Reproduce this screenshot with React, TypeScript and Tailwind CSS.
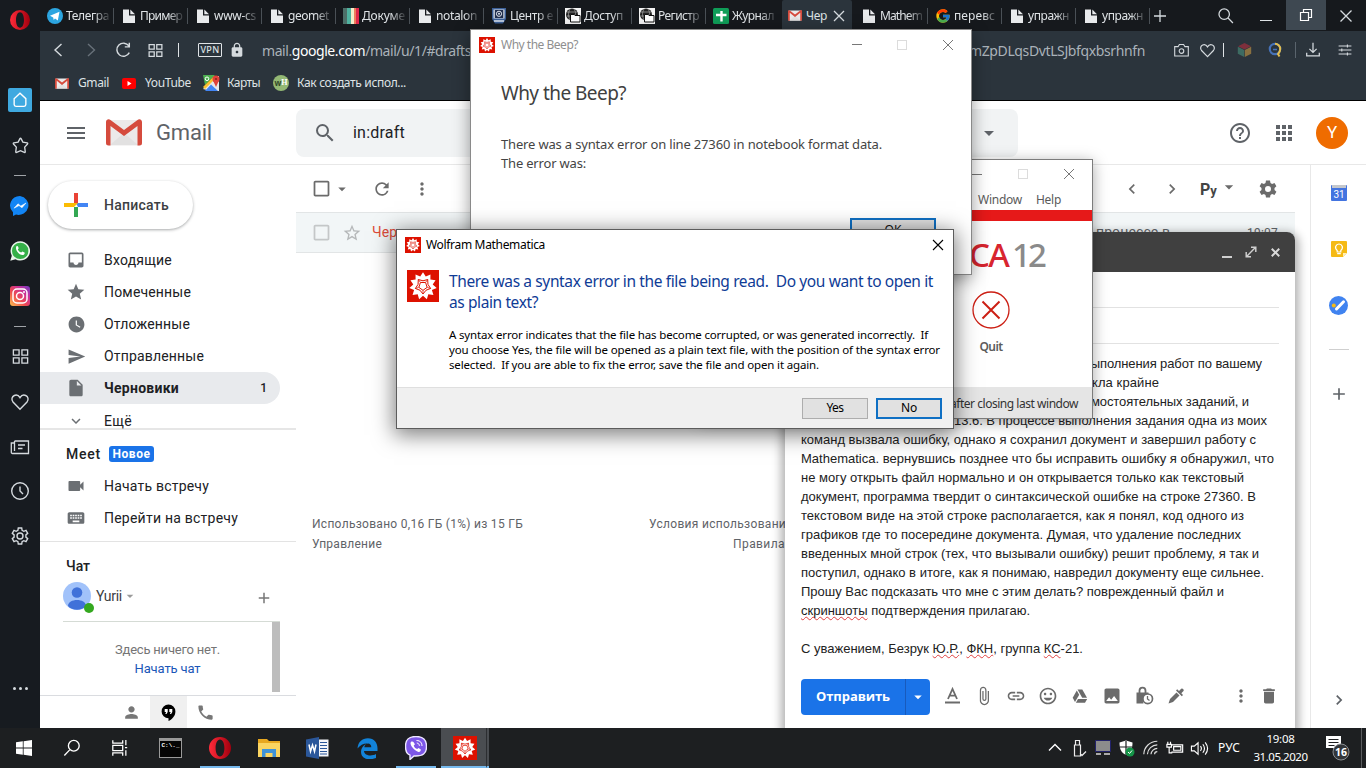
import { useLayoutEffect, useRef, type ReactNode } from "react";
import {
  MdInbox, MdStar, MdWatchLater, MdSend, MdInsertDriveFile, MdKeyboardArrowDown, MdVideocam, MdKeyboard,
  MdPerson, MdPhone, MdSearch, MdRefresh, MdMoreVert, MdStarBorder, MdCheckBoxOutlineBlank, MdHelpOutline,
  MdApps, MdAdd, MdAttachFile, MdLink, MdInsertEmoticon, MdImage, MdDelete, MdArrowDropDown,
  MdChevronLeft, MdChevronRight, MdMenu, MdLock,
} from "react-icons/md";
import { FcGoogle } from "react-icons/fc";

/* A run of text whose tracking is adjusted so that it spans w pixels. */
function T({ w, className = "", children }: { w: number; className?: string; children: ReactNode }) {
  const ref = useRef<HTMLSpanElement>(null);
  useLayoutEffect(() => {
    const el = ref.current;
    if (!el) return;
    el.style.letterSpacing = "0px";
    const n = (el.textContent || "").length;
    el.style.letterSpacing = (w - el.getBoundingClientRect().width) / n + "px";
  }, [w, children]);
  return <span ref={ref} className={"inline-block shrink-0 whitespace-pre " + className}>{children}</span>;
}

const star = (n: number, r1: number, r2: number, rot = 0) =>
  Array.from({ length: n * 2 }, (_, i) => {
    const a = (Math.PI * i) / n - Math.PI / 2 + rot;
    const r = i % 2 ? r2 : r1;
    return `${(16 + r * Math.cos(a)).toFixed(2)},${(16 + r * Math.sin(a)).toFixed(2)}`;
  }).join(" ");

function Spikey({ s }: { s: number }) {
  return (
    <svg width={s} height={s} viewBox="0 0 32 32" className="shrink-0">
      <rect width="32" height="32" fill="#dd1100" />
      <polygon points={star(11, 13.8, 9.8)} fill="#fff" />
      <g fill="none" stroke="#dd1100" strokeWidth="1">
        <polygon points={star(5, 8, 5.2, Math.PI)} />
        <polygon points={star(5, 4.4, 3.5, Math.PI)} />
        <path d="M16 20.500v3.500M11.600 17.400l-3.400 1.100M20.400 17.400l3.400 1.100M13.300 12.300l-2-2.800M18.700 12.300l2-2.800" strokeWidth=".7" />
      </g>
    </svg>
  );
}

const FileIcon = () => (
  <svg width="16" height="16" viewBox="0 0 16 16" className="shrink-0"><path d="M2 1.500h6v6h6V15H2z" fill="#e8eaec" /><path d="M9.300 1.500v4.800H14z" fill="#e8eaec" /></svg>
);

function GmailIcon({ w, h }: { w: number; h: number }) {
  return (
    <svg width={w} height={h} viewBox="0 0 36 27" preserveAspectRatio="none" className="shrink-0">
      <rect x="1" y="1" width="34" height="25.500" rx="2" fill="#eceaea" />
      <path d="M4 26L18 14l14 12z" fill="#dcdada" opacity=".6" />
      <path d="M0 3v21a2.500 2.500 0 002.500 2.500H4.500V7L18 17 31.500 7v19.500h2A2.500 2.500 0 0036 24V3c0-2.500-2.800-3.800-4.500-2L18 11 4.500 1C2.500-.6 0 .8 0 3z" fill="#d54b3d" />
    </svg>
  );
}

const OperaLogo = ({ s }: { s: number }) => (
  <svg width={s} height={s} viewBox="0 0 20 20" className="shrink-0">
    <defs><linearGradient id="op" x1="0" x2="1"><stop offset="0" stopColor="#ff2b3a" /><stop offset="1" stopColor="#a3000e" /></linearGradient></defs>
    <path fillRule="evenodd" fill="url(#op)" d="M10 0a10 10 0 100 20 10 10 0 000-20zm0 2.300c2.500 0 4 3.400 4 7.700s-1.500 7.700-4 7.700S6 14.300 6 10s1.500-7.700 4-7.700z" />
  </svg>
);

const Line = ({ s = 20, d, c = "#d5dade", sw = 1.4, vb = 20 }: { s?: number; d: string; c?: string; sw?: number; vb?: number }) => (
  <svg width={s} height={s} viewBox={`0 0 ${vb} ${vb}`} fill="none" stroke={c} strokeWidth={sw} className="shrink-0"><path d={d} /></svg>
);

const X = "M5 5l10 10M15 5L5 15";
const HEART = "M10 17.300L3 10C1 7.500 2 4.500 4.300 3.500 6.500 2.600 8.700 3.500 10 5.700c1.300-2.200 3.500-3.100 5.700-2.200C18 4.500 19 7.500 17 10z";
const GRID = "M2.500 3h6v5.500h-6zM11.500 3h6v5.500h-6zM2.500 11.500h6V17h-6zM11.500 11.500h6V17h-6z";

const Telegram = () => (
  <svg width="16" height="16" viewBox="0 0 16 16" className="shrink-0"><circle cx="8" cy="8" r="8" fill="#2ca5e0" /><path d="M3 7.800l9.500-4-1.700 8.700-2.800-2-1.300 1.500-.5-2.500z" fill="#fff" /></svg>
);
const Stripes = () => (
  <svg width="16" height="16" viewBox="0 0 16 16" className="shrink-0"><path fill="#4d6f68" d="M0 0h4v16H0z" /><path fill="#4fb3a0" d="M4 0h4v16H4z" /><path fill="#f5ecc9" d="M8 0h3v16H8z" /><path fill="#ee7e5e" d="M11 0h2v16h-2z" /><path fill="#e0264a" d="M13 0h3v16h-3z" /></svg>
);
const Crest = () => (
  <svg width="16" height="16" viewBox="0 0 15 16" className="shrink-0"><path fill="#3b5f97" d="M.5 0h14v11l-3 4.500h-8L.5 11z" /><path fill="#dfe5ec" d="M2 1.500h11v9H2z" /><path fill="#22304f" d="M3.300 2h8.500v8H3.300z" /><circle cx="7.500" cy="5.800" r="2.600" fill="none" stroke="#dfe5ee" /><circle cx="7.500" cy="5.800" r="1" fill="#dfe5ee" /><path d="M2.500 13h10" stroke="#dfe5ee" strokeWidth="1.500" /></svg>
);
const Folder = () => (
  <svg width="16" height="16" viewBox="0 0 16 16" className="shrink-0"><path fill="#f4f4f4" d="M0 0h16v16H0z" /><circle cx="7" cy="6.500" r="6" fill="#222" /><path d="M2 4h10M2 8h10M5 1c-2 4-2 7 0 11M9 1c2 3 2 6 0 8" stroke="#aaa" fill="none" strokeWidth=".7" /><path d="M5.500 6.500h3.500l1 1h5V14H5.500z" fill="#fff" stroke="#111" /></svg>
);
const Sheets = () => (
  <svg width="16" height="16" viewBox="0 0 16 16" className="shrink-0"><rect width="16" height="16" rx="1.500" fill="#0f9d58" /><path d="M8.500 3v10.500M3 7h10.500" stroke="#fff" strokeWidth="2.400" /></svg>
);

const tabs: [ReactNode, string, number][] = [
  [<Telegram />, "Телегра", 43], [<FileIcon />, "Пример", 42], [<FileIcon />, "www-cs", 42], [<FileIcon />, "geomet", 41],
  [<Stripes />, "Докуме", 43], [<FileIcon />, "notalon", 41], [<Crest />, "Центр е", 43], [<Folder />, "Доступ", 39],
  [<Folder />, "Регистр", 41], [<Sheets />, "Журнал", 42],
];
const tabs2: [ReactNode, string, number][] = [
  [<FileIcon />, "Mathem", 42], [<FcGoogle size={16} className="shrink-0" />, "перевс", 41], [<FileIcon />, "упражн", 41], [<FileIcon />, "упражн", 41],
];

function Tab({ icon, text, w, last }: { icon: ReactNode; text: string; w: number; last?: boolean }) {
  return (
    <div className={"flex h-[31px] shrink-0 items-center gap-[3px] pl-[7px] " + (last ? "w-[76px]" : "w-[74px]")}>
      {icon}
      <div className="flex h-[20px] w-[43px] shrink-0 items-center [mask-image:linear-gradient(to_right,black_65%,rgba(0,0,0,.15))]">
        <T w={w} className="text-[12px] leading-[20px] text-[#dfe3e6]">{text}</T>
      </div>
      <div className={"ml-[1px] h-[16px] w-px shrink-0 " + (last ? "bg-transparent" : "bg-[#4a5056]")} />
    </div>
  );
}

function Sidebar() {
  return (
    <aside className="flex w-[40px] shrink-0 flex-col bg-[#171b20] [&>div]:flex [&>div]:shrink-0 [&>div]:items-center [&>div]:justify-center">
      <div className="h-[40px]"><OperaLogo s={20} /></div>
      <div className="mt-[38px] h-[44px]"><span className="flex h-[24px] w-[24px] items-center justify-center rounded-[2px] bg-[#3fa9e0]"><Line s={18} d="M3.500 8.500L10 2.500l6.500 6v6.500q0 2-2 2h-9q-2 0-2-2z" c="#fff" sw={1.5} /></span></div>
      <div className="h-[46px]"><Line s={19} d="M10 2.300q.4 0 .6.500l1.900 3.700 4.500.8q1 .3.400 1.100l-3 3.300.6 4.900q0 1-1 .7L10 15.500l-4 1.800q-1 .3-1-.7l.6-4.900-3-3.300q-.6-.8.4-1.100l4.500-.8 1.900-3.700q.2-.5.6-.5z" /></div>
      <div className="h-[15px]"><i className="h-px w-[12px] bg-[#a0a4a8]" /></div>
      <div className="h-[46px]">
        <svg width="20" height="20" viewBox="0 0 20 20"><path d="M10 0a9.800 9.500 0 00-7 16.200V20l3-1.400A10 9.500 0 1010 0z" fill="#1285f5" /><path d="M4 12.200l4-4.400 2.800 2.200L16 7l-4 4.800-3-2.200z" fill="#fff" stroke="#fff" strokeWidth=".5" /></svg>
      </div>
      <div className="h-[44px]">
        <svg width="20" height="20" viewBox="0 0 20 20"><path d="M10.200.2A9.700 9.700 0 001.800 14.700L.3 19.700l5.200-1.400A9.700 9.700 0 1010.200.2z" fill="#e9f5ea" /><circle cx="10.200" cy="9.900" r="8.200" fill="#35b048" /><path d="M6.300 5.500c.8-.8 1.500-.6 1.800.3l.6 1.400-.9 1.200c.8 1.600 1.700 2.400 3.400 3.200l1.200-1.200 2.100 1c.6.300 0 2-1.200 2.500-3.500 1-8.600-4.700-7-8.400z" fill="#fff" /></svg>
      </div>
      <div className="h-[46px]">
        <svg width="20" height="20" viewBox="0 0 20 20"><defs><linearGradient id="ig" x1="0" y1="1" x2="1" y2="0"><stop offset="0" stopColor="#fcc14f" /><stop offset=".4" stopColor="#ef4a4f" /><stop offset=".7" stopColor="#c9309a" /><stop offset="1" stopColor="#6b3ec4" /></linearGradient></defs><rect width="20" height="20" rx="3" fill="url(#ig)" /><g fill="none" stroke="#fff" strokeWidth="1.500"><rect x="3" y="3" width="14" height="14" rx="4" /><circle cx="10" cy="10" r="3.500" /></g><circle cx="14" cy="6" r="1" fill="#fff" /></svg>
      </div>
      <div className="h-[14px]"><i className="h-px w-[12px] bg-[#a0a4a8]" /></div>
      <div className="h-[46px]"><Line s={19} d={GRID} /></div>
      <div className="h-[46px]"><Line s={20} d={HEART} /></div>
      <div className="h-[44px]"><Line s={20} d="M4.500 4h14v12.500h-16q-1.200 0-1.200-1.300V6h3.200M4.500 4v10M8 8h7M8 11.500h4.500" sw={1.3} /></div>
      <div className="h-[44px]"><Line s={20} d="M10 1.700a8.300 8.300 0 100 16.600 8.300 8.300 0 000-16.600zM10 5.500V10l3 3" /></div>
      <div className="h-[46px]"><Line s={20} d="M8.300 2h3.400l.4 2.400 1.700.9 2.200-.9 1.700 2.900-1.800 1.600v2.200l1.800 1.600-1.700 2.900-2.200-.9-1.700.9-.4 2.400H8.300l-.4-2.400-1.700-.9-2.200.9-1.700-2.900 1.800-1.600V8.900L2.300 7.300 4 4.400l2.200.9 1.700-.9zM10 7a3 3 0 100 6 3 3 0 000-6z" /></div>
      <div className="mt-[114px] h-[30px] gap-[3px]"><i className="h-[3px] w-[3px] rounded-full bg-[#d5dade]" /><i className="h-[3px] w-[3px] rounded-full bg-[#d5dade]" /><i className="h-[3px] w-[3px] rounded-full bg-[#d5dade]" /></div>
    </aside>
  );
}

function BrowserChrome() {
  return (
    <header className="h-[101px] border-b border-black bg-[#2b343c] text-[#dfe3e6]">
      <div className="flex h-[31px] bg-[#16191d]">
        {tabs.map(([i, t, w], k) => <Tab key={k} icon={i} text={t} w={w} last={k === 9} />)}
        <div className="flex w-[70px] shrink-0 items-center rounded-t-[2px] bg-[#2b343c] pl-[6px]">
          <GmailIcon w={14} h={11} />
          <T w={21} className="ml-[4px] text-[12px]">Чер</T>
          <span className="ml-[2px]"><Line s={20} d={X} sw={1.3} /></span>
        </div>
        <div className="w-[2px] shrink-0" />
        {tabs2.map(([i, t, w], k) => <Tab key={k} icon={i} text={t} w={w} />)}
        <div className="flex w-[26px] shrink-0 items-center"><Line s={20} d="M4 10h12M10 4v12" sw={1.3} /></div>
        <div className="ml-[19px] flex w-[52px] shrink-0 items-center justify-center pl-[10px]"><Line s={18} d="M8 2.200a5.800 5.800 0 100 11.600A5.800 5.800 0 008 2.200zM12.300 12.300l5.400 5.400" /></div>
        <div className="flex grow items-center pl-[13px] pt-[10px]"><i className="h-px w-[12px] bg-[#dfe3e6]" /></div>
        <div className="flex h-[30px] w-[40px] shrink-0 items-center justify-center bg-[#3e4851]"><Line s={14} vb={14} d="M1.500 4.500h8v8h-8zM4.500 4.500v-3h8v8h-3" c="#fff" sw={1.2} /></div>
        <div className="flex w-[40px] shrink-0 items-center justify-center"><Line s={22} d={X} sw={1.2} /></div>
      </div>
      <div className="flex h-[38px] items-center pl-[3px]">
        <div className="flex w-[32px] justify-center"><Line s={20} d="M12.500 4L6 10l6.500 6" /></div>
        <div className="flex w-[32px] justify-center"><Line s={20} d="M7 4l6.500 6L7 16" c="#68717a" /></div>
        <div className="flex w-[32px] justify-center"><Line s={18} d="M16.500 5.500A7.300 7.300 0 1017 13M17 2v4.500h-5" sw={1.6} /></div>
        <div className="flex w-[32px] justify-center"><Line s={17} d={GRID} sw={1.5} /></div>
        <div className="flex w-[14px] justify-center"><i className="h-[14px] w-px bg-[#dfe3e6]" /></div>
        <div className="ml-[13px] flex h-[14px] w-[24px] items-center justify-center rounded-[1px] border border-[#dfe3e6]"><T w={19} className="text-[9px] font-medium">VPN</T></div>
        <MdLock size={16} className="ml-[7px] text-[#d5dade]" />
        <div className="ml-[17px] flex w-[209px] text-[14px] text-[#aab2b9]"><T w={209}>mail.<span className="text-white">google.com</span>/mail/u/1/#drafts</T></div>
        <div className="ml-[498px] flex w-[180px] text-[14px] text-[#aab2b9]"><T w={176}>mZpDLqsDvtLSJbfqxbsrhnfn</T></div>
        <div className="ml-[19px] flex w-[26px] justify-center"><Line s={17} d="M2 5.500h4L7.500 3h5L14 5.500h4v11H2zM10 8a2.700 2.700 0 100 5.400A2.700 2.700 0 0010 8z" sw={1.3} /></div>
        <div className="flex w-[26px] justify-center"><Line s={17} d={HEART} sw={1.4} /></div>
        <i className="ml-[3px] h-[14px] w-px bg-[#dfe3e6]" />
        <svg width="15" height="16" viewBox="0 0 15 16" className="ml-[13px] shrink-0"><path d="M7.500 1L14 4.200 7.500 7.500 1 4.200z" fill="#7e2f3c" /><path d="M.8 4.800l6.400 3.200v7L.8 11.800z" fill="#3d6b62" /><path d="M14.200 4.800L7.800 8v7l6.400-3.200z" fill="#8a7140" /></svg>
        <svg width="15" height="16" viewBox="0 0 15 16" className="ml-[16px] shrink-0" fill="none"><circle cx="7" cy="7" r="5.200" stroke="#4672b8" strokeWidth="2.200" /><path d="M7 1.800A5.200 5.200 0 0112.200 7c0 3-1.600 4-2.200 5l1.500 2.500" stroke="#e3bd4d" strokeWidth="2" /><path d="M5 7.500h4" stroke="#4672b8" strokeWidth="1.500" /></svg>
        <i className="ml-[12px] h-[16px] w-px bg-[#5a646d]" />
        <div className="ml-[8px]"><Line s={18} d="M10 2v10.500M6 8.700l4 4 4-4M3 13v3.500h14V13" /></div>
        <div className="ml-[15px]"><Line s={16} d="M2 5h16M2 10h16M2 15h16M13 3v4M6 8v4M13 13v4" sw={1.4} /></div>
      </div>
      <div className="flex h-[28px] items-center pl-[15px] text-[12px]">
        <GmailIcon w={14} h={11} /><T w={31} className="ml-[9px]">Gmail</T>
        <svg width="14" height="11" viewBox="0 0 14 11" className="ml-[13px]"><rect width="14" height="11" rx="2" fill="#f00" /><path d="M5.500 3v5l4-2.500z" fill="#fff" /></svg><T w={46} className="ml-[9px]">YouTube</T>
        <svg width="17" height="16" viewBox="0 0 17 16" className="ml-[12px]"><path fill="#4caf50" d="M0 0h12L2 10z" /><path fill="#e8e8e8" d="M0 14l13-13h3v15H8z" /><path fill="#4285f4" d="M2 16l6-6.500 7 6.500z" /><path fill="#fbc02d" d="M0 12l11-11 2 2L2 14z" /><circle cx="13" cy="4" r="3.500" fill="#e0433a" /><path fill="#e0433a" d="M10 5.500h6L13 12z" /><circle cx="13" cy="4" r="1.100" fill="#8c2820" /><circle cx="4" cy="3.800" r="1.800" stroke="#fff" fill="none" /></svg><T w={33} className="ml-[7px]">Карты</T>
        <span className="ml-[13px] flex h-[16px] w-[16px] items-center justify-center rounded-full bg-[#93b874] text-[8px] font-bold text-[#344a2a]"><span>w</span><span className="font-['Liberation_Serif',serif] text-white">H</span></span><T w={109} className="ml-[8px]">Как создать испол...</T>
      </div>
    </header>
  );
}

function NavRow({ icon, text, w, active }: { icon: ReactNode; text: string; w: number; active?: boolean }) {
  return (
    <div className={"flex h-[32px] w-[240px] shrink-0 items-center pl-[26px] " + (active ? "rounded-r-full bg-[#e8eaed] font-bold text-[#202124]" : "text-[#202124]")}>
      <span className="flex w-[20px] justify-center text-[#6b6f73]">{icon}</span>
      <T w={w} className="ml-[18px] text-[14px]">{text}</T>
      {active && <span className="ml-auto mr-[13px] text-[12px] font-medium">1</span>}
    </div>
  );
}

function GmailNav() {
  return (
    <nav className="flex w-[256px] shrink-0 flex-col overflow-hidden font-['Roboto',sans-serif]">
      <div className="ml-[8px] mt-[16px] flex h-[48px] w-[145px] shrink-0 items-center rounded-full bg-white pl-[16px] shadow-[0_1px_3px_rgba(60,64,67,.45)]">
        <svg width="24" height="24" viewBox="0 0 24 24"><path fill="#ea4335" d="M10 0h4v12l-4-2z" /><path fill="#4285f4" d="M12 10h12v4H14z" /><path fill="#34a853" d="M10 14h4v10h-4z" /><path fill="#fbbc04" d="M0 10h14l-4 4H0z" /></svg>
        <T w={65} className="ml-[16px] text-[14px] font-medium text-[#3c4043]">Написать</T>
      </div>
      <div className="mt-[15px] flex h-[186px] shrink-0 flex-col border-b-2 border-[#e6e6e6]">
        <NavRow icon={<MdInbox size={20} />} text="Входящие" w={68} />
        <NavRow icon={<MdStar size={20} />} text="Помеченные" w={87} />
        <NavRow icon={<MdWatchLater size={19} />} text="Отложенные" w={86} />
        <NavRow icon={<MdSend size={19} />} text="Отправленные" w={100} />
        <NavRow icon={<MdInsertDriveFile size={20} />} text="Черновики" w={75} active />
        <div className="flex h-[24px] shrink-0 items-center pl-[26px] pt-[9px]">
          <span className="flex w-[20px] justify-center text-[#6b6f73]"><MdKeyboardArrowDown size={18} /></span>
          <T w={28} className="ml-[18px] text-[14px] leading-[18px] text-[#202124]">Ещё</T>
        </div>
      </div>
      <div className="flex h-[112px] shrink-0 flex-col border-b border-[#e3e3e3] pt-[8px]">
        <div className="flex h-[32px] items-center pl-[26px] text-[14px] font-medium text-[#202124]">
          <T w={35}>Meet</T>
          <span className="ml-[8px] flex h-[16px] w-[45px] items-center justify-center rounded-[3px] bg-[#1a73e8]"><T w={38} className="text-[12px] font-bold text-white">Новое</T></span>
        </div>
        <NavRow icon={<MdVideocam size={20} />} text="Начать встречу" w={105} />
        <NavRow icon={<MdKeyboard size={22} />} text="Перейти на встречу" w={134} />
      </div>
      <div className="flex h-[154px] shrink-0 flex-col items-start border-b border-[#dadce0] pt-[13px]">
        <T w={24} className="ml-[26px] h-[22px] text-[14px] font-medium leading-[22px] text-[#202124]">Чат</T>
        <div className="ml-[23px] flex h-[45px] w-[217px] items-center border-b border-[#d5dbd5] pb-[6px]">
          <span className="h-[28px] w-[33px]">
            <svg width="32" height="32" viewBox="0 0 32 32"><circle cx="14" cy="14" r="14" fill="#a1c2fa" /><circle cx="14" cy="10.500" r="5.300" fill="#4071d9" /><path d="M5 24c0-8 18-8 18 0-4 5-14 5-18 0z" fill="#4071d9" /><circle cx="26" cy="26" r="5" fill="#34a81f" /></svg>
          </span>
          <T w={26} className="text-[14px] text-[#3c4043]">Yurii</T>
          <MdArrowDropDown size={16} className="text-[#9a9a9a]" />
          <MdAdd size={18} className="ml-auto mr-[7px] mt-[4px] text-[#777]" />
        </div>
        <div className="ml-[23px] flex h-[70px] w-[217px] flex-col items-center border-r-8 border-[#bdbdbd] pt-[18px] text-[13px] leading-[19px]">
          <T w={105} className="text-[#757575]">Здесь ничего нет.</T>
          <T w={66} className="text-[#1a56b8]">Начать чат</T>
        </div>
      </div>
      <div className="flex h-[32px] pl-[73px] text-[#777]">
        <span className="flex w-[37px] items-center justify-center"><MdPerson size={19} /></span>
        <span className="flex w-[37px] items-center justify-center bg-[#f0f0f0]"><svg width="15" height="17" viewBox="0 0 15 17"><path d="M7.500.5a6.900 6.900 0 100 13.800V17c3-1.600 6.900-4.500 6.900-9.600A6.900 6.900 0 007.500.5z" fill="#000" /><path d="M3.700 5h3v3L5.500 10H4.300l.8-2H3.700zM8.300 5h3v3l-1.200 2H8.900l.8-2H8.300z" fill="#fff" /></svg></span>
        <span className="flex w-[37px] items-center justify-center"><MdPhone size={19} /></span>
      </div>
    </nav>
  );
}

function Gmail() {
  return (
    <div className="flex grow flex-col bg-white font-['Roboto',sans-serif]">
      <div className="flex h-[64px] shrink-0 items-center border-b border-[#e8e8e8]">
        <div className="flex w-[256px] items-center pl-[24px]">
          <MdMenu size={24} className="text-[#5f6368]" />
          <span className="ml-[18px]"><GmailIcon w={36} h={27} /></span>
          <T w={56} className="ml-[14px] text-[22px] text-[#5f6368]">Gmail</T>
        </div>
        <div className="flex h-[48px] w-[722px] items-center rounded-[8px] bg-[#f1f3f4] pl-[17px] pr-[17px]">
          <MdSearch size={24} className="text-[#5f6368]" />
          <T w={52} className="ml-[16px] text-[16px] text-[#202124]">in:draft</T>
          <MdArrowDropDown size={24} className="ml-auto text-[#5f6368]" />
        </div>
        <MdHelpOutline size={24} className="ml-[210px] text-[#5f6368]" />
        <MdApps size={24} className="ml-[20px] text-[#5f6368]" />
        <span className="ml-[20px] flex h-[32px] w-[32px] items-center justify-center rounded-full bg-[#ef6c00] text-[17px] text-white">Y</span>
      </div>
      <div className="flex h-[563px]">
        <GmailNav />
        <main className="flex w-[1014px] flex-col">
          <div className="flex h-[47px] shrink-0 items-center text-[#6b6b6b]">
            <MdCheckBoxOutlineBlank size={21} className="ml-[15px]" />
            <MdArrowDropDown size={18} className="ml-[1px]" />
            <MdRefresh size={20} className="ml-[21px]" />
            <MdMoreVert size={20} className="ml-[20px]" />
            <MdChevronLeft size={20} className="ml-[690px]" />
            <MdChevronRight size={20} className="ml-[20px]" />
            <span className="ml-[18px] flex w-[19px] items-baseline pt-[3px] font-bold text-[#444]"><span className="text-[16px]">Р</span><span className="text-[13px]">у</span></span>
            <MdArrowDropDown size={20} className="-mt-[3px]" />
            <svg width="20" height="20" viewBox="0 0 20 20" fill="#6b6b6b" className="ml-[19px]"><path fillRule="evenodd" d="M8 1.500h4l.5 2.500 1.600.9 2.400-.9 1.900 3.200-1.900 1.700v2.200l1.900 1.700-1.900 3.200-2.400-.9-1.600.9-.5 2.500H8L7.500 16l-1.600-.9-2.400.9-1.900-3.200 1.900-1.700V8.900L1.600 7.200 3.500 4l2.400.9L7.500 4zM10 7a3 3 0 100 6 3 3 0 000-6z" /></svg>
          </div>
          <div className="flex h-[41px] w-[999px] shrink-0 items-center border-y border-[#e2e5e6] bg-[#f2f6f7] text-[14px]">
            <MdCheckBoxOutlineBlank size={21} className="ml-[15px] text-[#c4c7c8]" />
            <MdStarBorder size={20} className="ml-[10px] text-[#b5b8b9]" />
            <T w={66} className="ml-[10px] text-[#dd4b39]">Черновик</T>
            <T w={74} className="ml-[658px] text-[#5f6368]">процессе в</T>
            <T w={31} className="ml-auto mr-[17px] text-[12px] text-[#5f6368]">19:07</T>
          </div>
          <div className="mt-[261px] flex w-[999px] text-[12px] leading-[20px] text-[#5f6368]">
            <div className="ml-[16px] flex w-[337px] flex-col items-start"><T w={211}>Использовано 0,16 ГБ (1%) из 15 ГБ</T><T w={70}>Управление</T></div>
            <div className="flex w-[230px] flex-col items-start"><T w={144}>Условия использования</T><T w={52} className="ml-[84px]">Правила</T></div>
          </div>
        </main>
        <aside className="flex w-[56px] flex-col items-center border-l border-[#e8e8e8] text-[#5f6368]">
          <svg width="16" height="16" viewBox="0 0 16 16" className="mt-[20px] shrink-0"><rect width="16" height="16" rx="1" fill="#4374e0" /><path d="M1 0h14v3H1z" fill="#c4c7cc" /><text x="8" y="13" textAnchor="middle" fontSize="10" fill="#fff" fontFamily="Roboto">31</text></svg>
          <svg width="16" height="16" viewBox="0 0 16 16" className="mt-[40px] shrink-0"><path d="M1 0h14q1 0 1 1v11l-4 4H1q-1 0-1-1V1q0-1 1-1z" fill="#f5ba15" /><path d="M12 16v-4h4z" fill="#fff0b8" /><path d="M6.200 9.500C3 7 5 3 8 3s5 4 1.800 6.500V11H6.200zM6.200 12.700h3.600" fill="none" stroke="#fff" strokeWidth="1.200" /></svg>
          <svg width="19" height="19" viewBox="0 0 19 19" className="mt-[39px] shrink-0"><circle cx="9.500" cy="9.500" r="9.500" fill="#4083f0" /><circle cx="4.800" cy="9.500" r="2" fill="#f5ba15" /><path d="M7.500 13l7-7.200" stroke="#fff" strokeWidth="3" strokeLinecap="round" /></svg>
          <i className="mt-[34px] h-px w-[20px] shrink-0 bg-[#cfcfcf]" />
          <MdAdd size={20} className="mt-[34px] shrink-0" />
          <MdChevronRight size={20} className="mt-[286px] shrink-0" />
        </aside>
      </div>
    </div>
  );
}

const body: [string, number][] = [
  ["команд вызвала ошибку, однако я сохранил документ и завершил работу с", 455],
  ["Mathematica. вернувшись позднее что бы исправить ошибку я обнаружил, что", 473],
  ["не могу открыть файл нормально и он открывается только как текстовый", 443],
  ["документ, программа твердит о синтаксической ошибке на строке 27360. В", 455],
  ["текстовом виде на этой строке располагается, как я понял, код одного из", 443],
  ["графиков где то посередине документа. Думая, что удаление последних", 440],
  ["введенных мной строк (тех, что вызывали ошибку) решит проблему, я так и", 458],
  ["поступил, однако в итоге, как я понимаю, навредил документу еще сильнее.", 463],
  ["Прошу Вас подсказать что мне с этим делать? поврежденный файл и", 423],
];

const wavy = "underline decoration-[#e04040] decoration-wavy decoration-[1px] underline-offset-1 [text-decoration-skip-ink:none]";

function Compose() {
  return (
    <section className="absolute left-[785px] top-[232px] flex h-[496px] w-[510px] flex-col rounded-t-[8px] bg-white font-['Liberation_Sans',sans-serif] text-[13px] leading-[19px] text-[#222] shadow-[0_4px_10px_4px_rgba(0,0,0,.3)]">
      <div className="flex h-[40px] shrink-0 items-center justify-end rounded-t-[8px] bg-[#404040] pr-[12px]">
        <i className="mt-[9px] h-[2px] w-[10px] bg-[#cfcfcf]" />
        <span className="ml-[11px]"><Line s={16} d="M4.500 15.500l11-11M10 4h6v6M10 16H4v-6" c="#cfcfcf" sw={1.8} /></span>
        <span className="ml-[9px]"><Line s={15} d={X} c="#d8d8d8" sw={2.6} /></span>
      </div>
      <div className="mx-[16px] h-[36px] shrink-0 border-b border-[#e2e2e2]" />
      <div className="mx-[16px] h-[36px] shrink-0 border-b border-[#e2e2e2]" />
      <div className="mt-[10px] flex h-[315px] shrink-0 flex-col items-start pl-[16px]">
        <T w={178} className="ml-[283px]">выполнения работ по вашему</T>
        <T w={67} className="ml-[291px]">кла крайне</T>
        <T w={158} className="ml-[290px]">мостоятельных заданий, и</T>
        <T w={313} className="ml-[153px]">13.6. В процессе выполнения задания одна из моих</T>
        {body.map(([t, w]) => <T key={t} w={w}>{t}</T>)}
        <T w={229}><span className={wavy}>скриншоты</span> подтверждения прилагаю.</T>
        <div className="h-[19px]" />
        <T w={282}>С уважением, Безрук <span className={wavy}>Ю.Р.</span>, <span className={wavy}>ФКН</span>, группа <span className={wavy}>КС</span>-21.</T>
      </div>
      <div className="mt-[10px] flex h-[36px] shrink-0 items-center pl-[16px] text-[#6b6b6b]">
        <div className="flex h-[36px] w-[129px] shrink-0 items-center rounded-[4px] bg-[#1a73e8] text-white">
          <span className="flex h-full w-[105px] shrink-0 items-center border-r border-[#185abc] pb-[2px] pl-[15px]"><T w={74} className="font-['Open_Sans',sans-serif] text-[13px] font-bold">Отправить</T></span>
          <MdArrowDropDown size={18} className="ml-[3px] shrink-0" />
        </div>
        <div className="-mt-[2px] ml-[6px] flex w-[256px] [&>span]:flex [&>span]:w-[32px] [&>span]:items-center [&>span]:justify-center">
          <span><svg width="15" height="18" viewBox="0 0 15 18" fill="none" stroke="#6b6b6b"><path d="M3 12L7.500 2 12 12M4.700 8.700h5.600" strokeWidth="1.800" /><path d="M0 15.500h15" strokeWidth="2" /></svg></span>
          <span><MdAttachFile size={20} /></span>
          <span><MdLink size={20} /></span>
          <span><MdInsertEmoticon size={20} /></span>
          <span><svg width="16" height="16" viewBox="0 0 16 16" fill="#6b6b6b"><path d="M5.500 1.500h4.800L15 9.800h-4.800z" /><path d="M4.800 2.500L7.200 6.700 3 14 .7 9.800z" /><path d="M6 11h9.200L13 14.800H3.900z" /></svg></span>
          <span><MdImage size={20} /></span>
          <span><svg width="19" height="20" viewBox="0 0 19 20"><path d="M4.500 7V4.700a3 3 0 016 0V7" fill="none" stroke="#6b6b6b" strokeWidth="1.800" /><path d="M1.500 6.500h12V9a6 6 0 00-5 8.500h-7z" fill="#6b6b6b" /><circle cx="12.700" cy="12.800" r="4.800" fill="#fff" stroke="#6b6b6b" strokeWidth="1.700" /><path d="M12.500 10v3l2 1.500" fill="none" stroke="#6b6b6b" strokeWidth="1.300" /></svg></span>
          <span><svg width="18" height="18" viewBox="0 0 18 18" fill="#6b6b6b"><path d="M1.500 16.500L3 12l6.500-6.500 3 3L6 15z" /><path d="M9 3.500l1.200-1.200 1.800 1.700L14.200 1.700q.8-.6 1.500 0l.8.900q.6.700 0 1.500L14.300 6.300 16 8l-1.200 1.200z" /></svg></span>
        </div>
        <MdMoreVert size={20} className="-mt-[2px] ml-[39px]" />
        <MdDelete size={20} className="-mt-[2px] ml-[8px]" />
      </div>
    </section>
  );
}

function Splash() {
  return (
    <section className="absolute left-[700px] top-[159px] flex h-[260px] w-[393px] flex-col border border-[#7c7c7c] bg-white shadow-[0_3px_14px_rgba(0,0,0,.35)]">
      <div className="flex h-[30px] shrink-0 items-center justify-end pb-[2px] pr-[13px]">
        <i className="mr-[36px] h-px w-[10px] bg-[#777]" />
        <i className="mr-[31px] h-[10px] w-[10px] border border-[#dcdcdc]" />
        <Line s={20} d={X} c="#777" sw={1} />
      </div>
      <div className="flex h-[20px] shrink-0 items-center pl-[277px] text-[12px] text-[#5a5a5a]"><T w={44}>Window</T><T w={25} className="ml-[14px]">Help</T></div>
      <div className="h-[11px] shrink-0 bg-[#e61919]" />
      <div className="flex h-[70px] shrink-0 items-center pb-[3px] pl-[268px] font-['Noto_Sans',sans-serif] text-[33px] font-medium"><T w={39} className="text-[#d8252f]">CA</T><T w={32} className="ml-[4px] text-[#8a8a8a]">12</T></div>
      <div className="ml-[271px] flex w-[38px] flex-col items-center">
        <svg width="38" height="38" viewBox="0 0 38 38" fill="none" stroke="#cc1f14"><circle cx="19" cy="19" r="18" strokeWidth="1.300" /><path d="M10.500 10.500l17 17M27.500 10.500l-17 17" strokeWidth="2" /></svg>
        <T w={23} className="mt-[9px] text-[12px] font-semibold text-[#5c5c5c]">Quit</T>
      </div>
      <div className="mt-auto flex h-[31px] shrink-0 items-center bg-[#e5e5e5] pl-[249px] pt-[2px] text-[12px] text-[#333]"><T w={128}>after closing last window</T></div>
    </section>
  );
}

function Beep() {
  return (
    <section className="absolute left-[470px] top-[29px] flex h-[246px] w-[502px] flex-col items-start border border-[#8a8a8a] bg-white shadow-[0_4px_16px_rgba(0,0,0,.4)]">
      <div className="flex h-[29px] w-full shrink-0 items-center pl-[8px] pr-[13px]">
        <Spikey s={16} />
        <T w={77} className="ml-[6px] text-[12px] text-[#8f8f8f]">Why the Beep?</T>
        <i className="ml-auto mr-[35px] h-px w-[10px] bg-[#777]" />
        <i className="mr-[31px] h-[10px] w-[10px] border border-[#dcdcdc]" />
        <Line s={20} d={X} c="#777" sw={1} />
      </div>
      <T w={125} className="ml-[30px] mt-[19px] h-[30px] font-['Noto_Sans',sans-serif] text-[19px] leading-[30px] text-[#404040]">Why the Beep?</T>
      <T w={381} className="ml-[30px] mt-[27px] h-[19px] font-['Noto_Sans',sans-serif] text-[13px] leading-[19px] text-[#444]">There was a syntax error on line 27360 in notebook format data.</T>
      <T w={85} className="ml-[30px] h-[19px] font-['Noto_Sans',sans-serif] text-[13px] leading-[19px] text-[#444]">The error was:</T>
      <div className="ml-[379px] mt-[45px] flex h-[23px] w-[86px] items-center justify-center border-2 border-[#0f70c4] bg-[#e1e1e1] text-[12px] text-[#111]">OK</div>
    </section>
  );
}

function ErrorDialog() {
  return (
    <section className="absolute left-[396px] top-[229px] flex h-[200px] w-[558px] flex-col border border-[#5c5c5c] bg-white text-black shadow-[0_4px_20px_2px_rgba(0,0,0,.5)]">
      <div className="flex h-[29px] shrink-0 items-center pl-[8px] pr-[5px]">
        <Spikey s={16} />
        <T w={119} className="ml-[5px] text-[12px]">Wolfram Mathematica</T>
        <span className="ml-auto"><Line s={20} d={X} c="#000" sw={1.1} /></span>
      </div>
      <div className="flex h-[128px] shrink-0 pl-[10px] pt-[11px]">
        <Spikey s={32} />
        <div className="ml-[10px] mt-[1px] flex flex-col items-start">
          <div className="flex flex-col items-start text-[15.500px] leading-[21px] text-[#0f3c96]">
            <T w={484}>There was a syntax error in the file being read.  Do you want to open it</T>
            <T w={89}>as plain text?</T>
          </div>
          <div className="mt-[14px] flex flex-col items-start text-[11.500px] leading-[15px]">
            <T w={479}>A syntax error indicates that the file has become corrupted, or was generated incorrectly.  If</T>
            <T w={491}>you choose Yes, the file will be opened as a plain text file, with the position of the syntax error</T>
            <T w={370}>selected.  If you are able to fix the error, save the file and open it again.</T>
          </div>
        </div>
      </div>
      <div className="flex grow items-center justify-end gap-[8px] border-t border-[#dfdfdf] bg-[#f0f0f0] pr-[11px] text-[12px]">
        <span className="flex h-[21px] w-[66px] items-center justify-center border border-[#adadad] bg-[#e1e1e1]"><T w={17}>Yes</T></span>
        <span className="flex h-[21px] w-[66px] items-center justify-center border-2 border-[#0f70c4] bg-[#e1e1e1]"><T w={16}>No</T></span>
      </div>
    </section>
  );
}

function Taskbar() {
  return (
    <footer className="flex h-[40px] shrink-0 items-center bg-[#1d1f21] text-white [&>div]:flex [&>div]:h-full [&>div]:shrink-0 [&>div]:items-center [&>div]:justify-center">
      <div className="w-[48px]"><svg width="16" height="16" viewBox="0 0 16 16" fill="#fff"><path d="M0 2.300l6.800-1v6.300H0zM7.600 1.200L16 0v7.600H7.600zM0 8.400h6.800v6.300L0 13.700zM7.600 8.400H16V16l-8.400-1.200z" /></svg></div>
      <div className="w-[48px]"><Line s={18} d="M12 1.500a6 6 0 100 12 6 6 0 000-12zM7.700 11.800L1.500 18.300" c="#fff" sw={1.5} /></div>
      <div className="w-[48px]"><Line s={18} d="M2 1.500v3h11v-3M2 18.500v-3h11v3M2 7h11v6H2zM16.500 1v6M16.500 12.500v6M15.500 9.500h2.500" c="#fff" sw={1.4} /></div>
      <div className="w-[52px]"><svg width="23" height="20" viewBox="0 0 23 20"><path d="M0 0h23v20H0z" fill="#9a9a9a" /><path d="M1 3h21v16H1z" fill="#050505" /><text x="2.500" y="9" fontSize="6" fontFamily="Liberation Mono" fontWeight="700" fill="#fff">C:\._</text></svg></div>
      <div className="w-[48px]"><div className="flex h-full w-[40px] items-center justify-center border-b-2 border-t-2 border-b-[#76b9ed] border-t-transparent"><OperaLogo s={22} /></div></div>
      <div className="w-[49px]"><svg width="22" height="19" viewBox="0 0 22 19"><path d="M0 0h9l2 2H22v16H0z" fill="#e8a820" /><path d="M0 4h22v14H0z" fill="#fbd561" /><path d="M4 18v-8h14v8h-3.500v-4h-7v4z" fill="#3f93d8" /></svg></div>
      <div className="w-[49px]"><svg width="23" height="22" viewBox="0 0 23 22"><path d="M12 2.500h10.500v17H12z" fill="#f4f6fa" /><path d="M14 5.500h7M14 8.500h7M14 11.500h7M14 14.500h7M14 17h7" stroke="#2b579a" strokeWidth="1.200" /><path d="M0 2.500L13 0v22L0 19.500z" fill="#2b579a" /><path d="M3 7.500l1.500 7L6.500 8l2 6.500L10 7.500" fill="none" stroke="#fff" strokeWidth="1.500" /></svg></div>
      <div className="w-[50px]"><svg width="21" height="21" viewBox="0 0 21 21"><path d="M.5 10.500C1 4 5.300.3 10.800.3c6.500 0 9.700 4.700 9.700 10V13H7c.3 5 8 5.500 12 3v4C10 23.500 2 19.500 4.500 11 5.500 8 8.500 6 10.500 5.500 7 5.200 3 7 .5 10.500zM7.300 9.200h7C14.200 4 8 4.500 7.300 9.200z" fill="#1283da" /></svg></div>
      <div className="w-[48px]"><div className="flex h-full w-[40px] items-center justify-center border-b-2 border-t-2 border-b-[#76b9ed] border-t-transparent"><svg width="22" height="24" viewBox="0 0 22 24"><path d="M11 .5C4 .5.500 3 .500 10.500c0 5 1.500 7.500 4.500 8.700V23.500l4-3.500c9 .5 12.500-2.500 12.500-9.500S18 .500 11 .500z" fill="#7d57e8" stroke="#eee8ff" strokeWidth="1.400" /><path d="M6.500 5.500c-2 1.500-.5 4 1 6s4 4 6 4.500c1.500 0 3-2 2-2.800l-2-1.200-1.300 1c-1.700-.5-3.200-2.200-3.500-3.600l1.200-1c-.5-1.200-1.600-3.500-3.400-2.900z" fill="#fff" /><path d="M11.500 4.500c4 0 5.500 2.500 5.500 5.500M11.800 7c1.700.2 2.500 1.200 2.600 2.800" fill="none" stroke="#fff" /></svg></div></div>
      <div className="ml-[1px] w-[45px] border-b-2 border-t-2 border-b-[#76b9ed] border-t-[#4a4d51] bg-[#4a4d51] pl-[2px]"><Spikey s={24} /></div>
      <div className="w-[3px] border-b-2 border-l border-b-[#76b9ed] border-l-[#2c2e31] bg-[#4a4d51]" />
      <div className="ml-auto w-[24px]"><Line s={20} d="M4 12.500l6-6 6 6" c="#fff" /></div>
      <div className="w-[24px]"><Line s={20} d="M5.500 7h6v11h-6zM6.500 7V2.500h4V7M11 15l2 2.500 4-4" c="#eee" sw={1.2} /></div>
      <div className="w-[24px]"><svg width="16" height="16" viewBox="0 0 16 16"><path d="M.5.5h15v11H.5z" fill="#8c8c8c" stroke="#22226a" /><path d="M1 14h5M9 14h6" stroke="#aaa" strokeWidth="2" /></svg></div>
      <div className="w-[24px]"><svg width="16" height="17" viewBox="0 0 16 17"><path d="M7 .5l6.500 2C13.500 9 12 12.500 7 15 2 12.500.5 9 .5 2.500z" fill="#fff" /><path d="M7 1v14M.5 7h13" stroke="#1d1f21" strokeWidth="1.200" /><circle cx="11" cy="12" r="4.500" fill="#149447" /><path d="M9 12l1.500 1.500L13 10.500" stroke="#fff" fill="none" /></svg></div>
      <div className="w-[24px]"><Line s={18} d="M2 17A15 15 0 0117 2.500M6 17A11 11 0 0117 6.500M10 17A7 7 0 0117 10.500M14 17a3 3 0 013-3" c="#ddd" sw={1.3} /></div>
      <div className="w-[24px]"><Line s={18} d="M6 6.500h12.500v8H6M8.500 8.500h8v4h-8zM2 3v3M5 3v3M1 6h5v3H1zM3.500 9v6.500H7" c="#fff" sw={1.3} /></div>
      <div className="w-[24px]"><Line s={19} d="M1.500 7.500h3L8.500 4v12l-4-3.500h-3zM11 7.500q2 2.500 0 5M13.500 5.500q3.500 4.500 0 9M16 3.500q5 6.500 0 13" c="#fff" sw={1.2} /></div>
      <div className="w-[36px]"><T w={22} className="text-[12px]">РУС</T></div>
      <div className="w-[67px] flex-col text-[11.500px] leading-[18px]"><T w={28}>19:08</T><T w={54}>31.05.2020</T></div>
      <div className="ml-[4px] w-[40px]">
        <svg width="30" height="28" viewBox="0 0 30 28"><path d="M3 2h15v12h-5v3l-3-3H3z" fill="#fff" /><path d="M5.500 5.500h10M5.500 8.500h10M5.500 11.500h6" stroke="#1d1f21" /><circle cx="18" cy="18" r="8" fill="#33363a" stroke="#8b8f93" /><text x="18" y="22" textAnchor="middle" fontSize="10.500" fontWeight="700" fontFamily="Open Sans" fill="#fff">16</text></svg>
      </div>
      <div className="ml-[3px] mr-[4px] w-px bg-[#5a5c5e]" />
    </footer>
  );
}

export default function App() {
  return (
    <div className="relative flex h-[768px] w-[1366px] flex-col overflow-hidden bg-white font-['Noto_Sans','Open_Sans',sans-serif]">
      <div className="flex h-[728px] shrink-0">
        <Sidebar />
        <div className="flex w-[1326px] shrink-0 flex-col">
          <BrowserChrome />
          <Gmail />
        </div>
      </div>
      <Taskbar />
      <div className="pointer-events-none absolute left-0 top-0 h-[728px] w-[1366px] overflow-hidden">
        <Compose />
        <Splash />
        <Beep />
        <ErrorDialog />
      </div>
    </div>
  );
}
